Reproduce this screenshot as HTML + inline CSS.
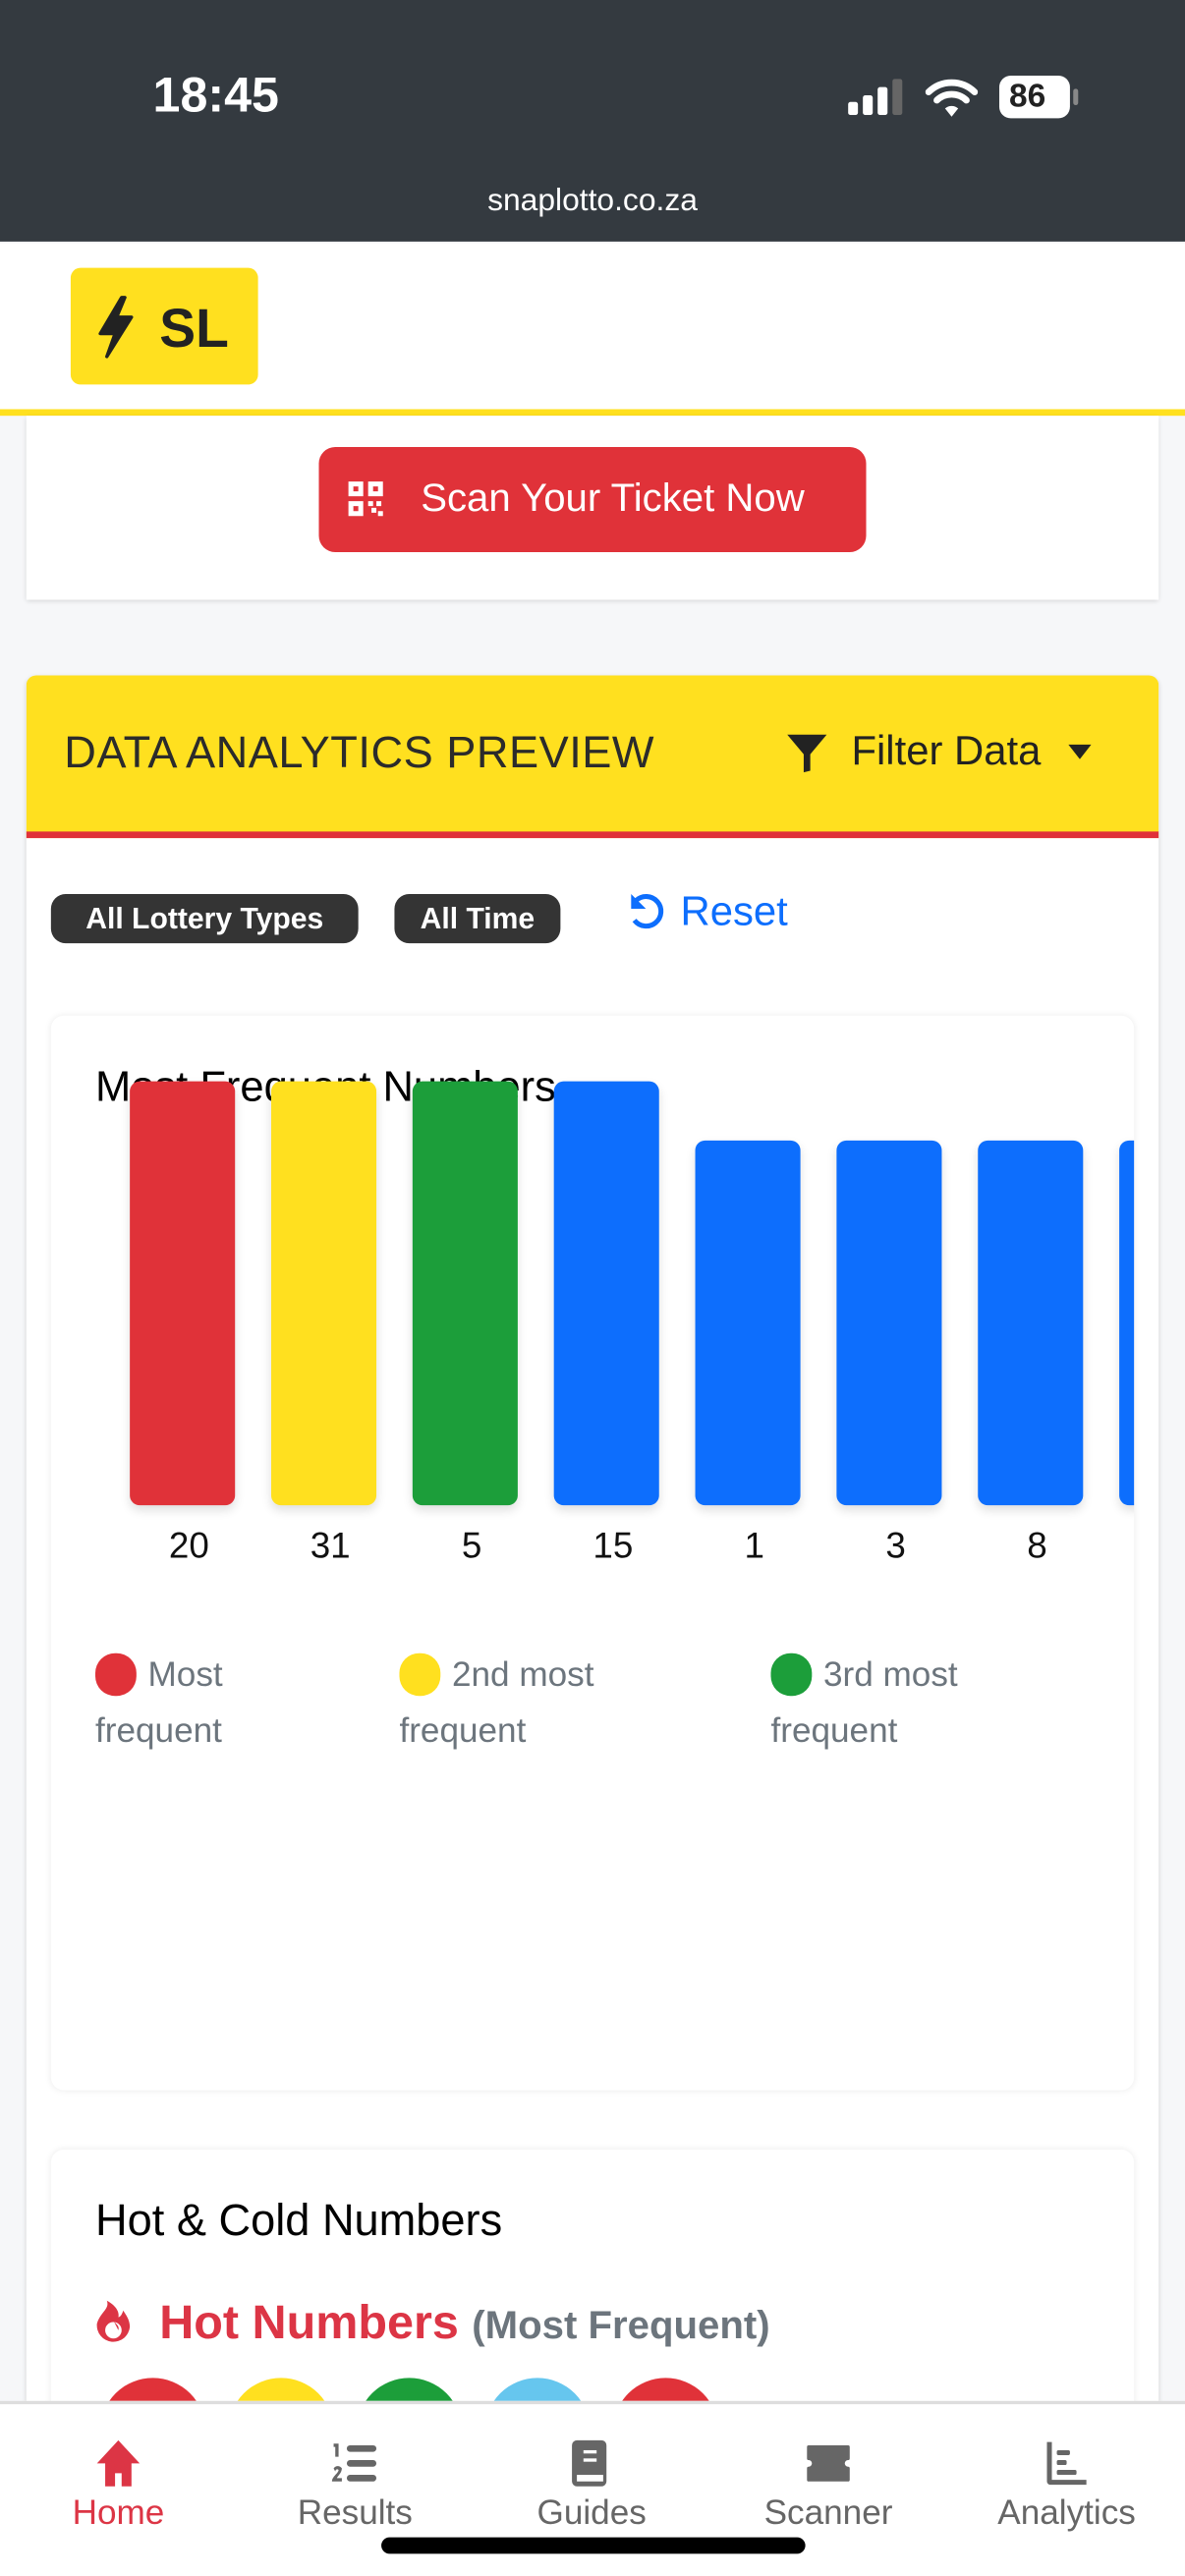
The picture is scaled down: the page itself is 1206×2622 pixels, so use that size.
<!DOCTYPE html>
<html><head><meta charset="utf-8"><style>
html,body{margin:0;padding:0;width:1206px;height:2622px;overflow:hidden;background:#f6f7f9}
#w{width:721px;height:1568px;transform:scale(1.67268);transform-origin:0 0;font-family:"Liberation Sans",sans-serif;position:relative;overflow:hidden;background:#f6f7f9}
.a{position:absolute}
.bar{position:absolute;width:64px;border-radius:6px;box-shadow:0 3px 6px rgba(0,0,0,.12)}
.lbl{position:absolute;top:928px;width:64px;text-align:center;font-size:22px;color:#111}
.lg{position:absolute;top:1003px;font-size:21px;color:#6c757d;line-height:34px;width:150px}
.lg i{display:inline-block;width:25px;height:26px;border-radius:12px;vertical-align:-6px;margin-right:7px}
.nav{position:absolute;top:1484px;width:144px;text-align:center;font-size:21px;color:#666}
.nav svg{display:block;margin:0 auto 4px}
.ball{position:absolute;top:1447px;width:64px;height:64px;border-radius:50%}
</style></head><body><div id="w">
<div class="a" style="left:0;top:0;width:721px;height:147px;background:#343a40"></div>
<div class="a" style="left:93px;top:42px;font-size:30px;font-weight:bold;color:#fff">18:45</div>
<svg class="a" style="left:516px;top:48px" width="36" height="22"><rect x="0" y="14" width="6" height="8" rx="1.5" fill="#fff"/><rect x="9" y="10" width="6" height="12" rx="1.5" fill="#fff"/><rect x="18" y="5" width="6" height="17" rx="1.5" fill="#fff"/><rect x="27" y="0" width="6" height="22" rx="1.5" fill="#666"/></svg>
<svg class="a" style="left:563px;top:46px" width="32" height="26" viewBox="0 0 32 26"><path d="M2 10A20 20 0 0 1 30 10" stroke="#fff" stroke-width="4" fill="none" stroke-linecap="round"/><path d="M7 15A13 13 0 0 1 25 15" stroke="#fff" stroke-width="4" fill="none" stroke-linecap="round"/><path d="M12 20L16 25L20 20A6 6 0 0 0 12 20Z" fill="#fff"/></svg>
<div class="a" style="left:608px;top:46px;width:43px;height:26px;background:#fff;border-radius:7px;font-size:20px;font-weight:bold;color:#222;line-height:26px;text-indent:6px">86</div>
<div class="a" style="left:653px;top:54px;width:3px;height:10px;background:#888;border-radius:2px"></div>
<div class="a" style="left:0;top:112px;width:721px;text-align:center;font-size:19px;color:#fff">snaplotto.co.za</div>
<div class="a" style="left:0;top:148px;width:721px;height:102px;background:#fff"></div>
<div class="a" style="left:43px;top:163px;width:114px;height:71px;background:#ffe01f;border-radius:6px"></div>
<svg class="a" style="left:58px;top:179px" width="26" height="40" viewBox="0 0 26 40"><path d="M16 2L3 24H12L7 38L22 14H13L18 2Z" fill="#222" stroke="#222" stroke-width="2" stroke-linejoin="round"/></svg>
<div class="a" style="left:97px;top:181px;font-size:33px;font-weight:bold;color:#222">SL</div>
<div class="a" style="left:0;top:249px;width:721px;height:4px;background:#ffe01f"></div>
<div class="a" style="left:16px;top:253px;width:689px;height:112px;background:#fff;box-shadow:0 1px 3px rgba(0,0,0,.15)"></div>
<div class="a" style="left:194px;top:272px;width:333px;height:64px;background:#e03239;border-radius:10px"></div>
<svg class="a" style="left:211px;top:292px" width="24" height="24" viewBox="0 0 24 24" fill="#fff"><path d="M1 1h9v9H1zM4 4v3h3V4zM13 1h9v9h-9zM16 4v3h3V4zM1 13h9v9H1zM4 16v3h3v-3zM13 13h3v3h-3zM18 13h3v3h-3zM15 17h3v3h-3zM19 19h3v3h-3z"/></svg>
<div class="a" style="left:256px;top:290px;font-size:24px;color:#fff">Scan Your Ticket Now</div>
<div class="a" style="left:16px;top:411px;width:689px;height:1100px;background:#fff;border-radius:6px;box-shadow:0 1px 3px rgba(0,0,0,.15);overflow:hidden">
<div style="height:95px;background:#ffe01f;border-bottom:4px solid #e03239"></div></div>
<div class="a" style="left:39px;top:443px;font-size:27px;color:#2b2b2b;letter-spacing:.3px">DATA ANALYTICS PREVIEW</div>
<svg class="a" style="left:478px;top:445px" width="26" height="26" viewBox="0 0 26 26"><path d="M1 2h24L15 14v10l-4 1V14Z" fill="#222"/></svg>
<div class="a" style="left:518px;top:443px;font-size:25px;color:#222">Filter Data</div>
<svg class="a" style="left:650px;top:453px" width="14" height="9"><path d="M0 0h14L7 9Z" fill="#222"/></svg>
<div class="a" style="left:31px;top:544px;width:187px;height:30px;background:#343434;border-radius:9px;color:#fff;font-weight:bold;font-size:18px;line-height:30px;text-align:center">All Lottery Types</div>
<div class="a" style="left:240px;top:544px;width:101px;height:30px;background:#343434;border-radius:9px;color:#fff;font-weight:bold;font-size:18px;line-height:30px;text-align:center">All Time</div>
<svg class="a" style="left:382px;top:543px" width="24" height="26" viewBox="0 0 24 26"><path d="M5 5A9 9 0 1 1 4 17" stroke="#0d6efd" stroke-width="3" fill="none"/><path d="M2 1v9h9Z" fill="#0d6efd"/></svg>
<div class="a" style="left:414px;top:541px;font-size:25px;color:#0d6efd">Reset</div>
<div class="a" style="left:31px;top:618px;width:659px;height:654px;background:#fff;border-radius:8px;box-shadow:0 0 4px rgba(0,0,0,.08);overflow:hidden">
<div class="a" style="left:27px;top:28px;font-size:26px;color:#000">Most Frequent Numbers</div>
<div class="bar" style="left:48px;top:40px;height:258px;background:#e03239"></div>
<div class="bar" style="left:134px;top:40px;height:258px;background:#ffe01f"></div>
<div class="bar" style="left:220px;top:40px;height:258px;background:#1c9e3a"></div>
<div class="bar" style="left:306px;top:40px;height:258px;background:#0d6efd"></div>
<div class="bar" style="left:392px;top:76px;height:222px;background:#0d6efd"></div>
<div class="bar" style="left:478px;top:76px;height:222px;background:#0d6efd"></div>
<div class="bar" style="left:564px;top:76px;height:222px;background:#0d6efd"></div>
<div class="bar" style="left:650px;top:76px;height:222px;background:#0d6efd"></div>
</div>
<div class="lbl" style="left:83px">20</div><div class="lbl" style="left:169px">31</div><div class="lbl" style="left:255px">5</div><div class="lbl" style="left:341px">15</div><div class="lbl" style="left:427px">1</div><div class="lbl" style="left:513px">3</div><div class="lbl" style="left:599px">8</div>
<div class="lg" style="left:58px"><i style="background:#e03239"></i>Most frequent</div>
<div class="lg" style="left:243px"><i style="background:#ffe01f"></i>2nd most frequent</div>
<div class="lg" style="left:469px"><i style="background:#1c9e3a"></i>3rd most frequent</div>
<div class="a" style="left:31px;top:1308px;width:659px;height:300px;background:#fff;border-radius:8px;box-shadow:0 0 4px rgba(0,0,0,.08)"></div>
<div class="a" style="left:58px;top:1336px;font-size:27px;color:#000">Hot &amp; Cold Numbers</div>
<svg class="a" style="left:57px;top:1399px" width="24" height="30" viewBox="0 0 24 30"><path d="M8 1C10 6 4 8 2 15a10 10 0 0 0 20 2c0-5-3-8-4-10-1 3-2 4-3 4C16 7 12 3 8 1Z" fill="#dc3545"/><circle cx="12" cy="19" r="5" fill="#fff"/><path d="M12 13c1 2 4 3 3 6" fill="#dc3545"/></svg>
<div class="a" style="left:97px;top:1398px;font-size:29px;font-weight:bold;color:#dc3545">Hot Numbers <span style="font-size:24px;color:#6c757d">(Most Frequent)</span></div>
<div class="ball" style="left:61px;background:#e03239"></div>
<div class="ball" style="left:139px;background:#ffe01f"></div>
<div class="ball" style="left:217px;background:#1c9e3a"></div>
<div class="ball" style="left:295px;background:#66c6ee"></div>
<div class="ball" style="left:373px;background:#e03239"></div>
<div class="a" style="left:0;top:1461px;width:721px;height:107px;background:#fff;border-top:2px solid #ddd"></div>
<div class="nav" style="left:0;color:#dc3545"><svg width="30" height="30" viewBox="0 0 30 30"><path d="M15 1L2 15h5v14h6v-8h4v8h6V15h5Z" fill="#dc3545"/></svg>Home</div>
<div class="nav" style="left:144px"><svg width="30" height="30" viewBox="0 0 30 30" fill="#666"><path d="M2 3h3v8H3V5H2ZM2 18a3 3 0 0 1 5 0c0 3-3 5-3 6h3v2H1c0-3 4-5 4-7-1-1-2 0-2 1Z"/><rect x="10" y="4" width="18" height="4" rx="2"/><rect x="10" y="13" width="18" height="4" rx="2"/><rect x="10" y="22" width="18" height="4" rx="2"/></svg>Results</div>
<div class="nav" style="left:288px"><svg width="30" height="30" viewBox="0 0 30 30"><rect x="3" y="1" width="21" height="28" rx="3" fill="#666"/><rect x="6" y="22" width="16" height="4" fill="#fff"/><rect x="10" y="7" width="8" height="2" fill="#fff"/><rect x="10" y="12" width="8" height="2" fill="#fff"/></svg>Guides</div>
<div class="nav" style="left:432px"><svg width="30" height="30" viewBox="0 0 30 30"><path d="M3 5h24v7a3 3 0 0 0 0 6v7H3v-7a3 3 0 0 0 0-6Z" fill="#666" stroke="#666" stroke-linejoin="round" stroke-width="2"/></svg>Scanner</div>
<div class="nav" style="left:577px"><svg width="30" height="30" viewBox="0 0 30 30" fill="#666"><path d="M3 2h3v23h21v3H5a2 2 0 0 1-2-2Z"/><rect x="9" y="7" width="8" height="3" rx="1"/><rect x="9" y="13" width="6" height="3" rx="1"/><rect x="9" y="19" width="12" height="3" rx="1"/></svg>Analytics</div>
<div class="a" style="left:232px;top:1544px;width:258px;height:10px;background:#000;border-radius:5px"></div>
</div></body></html>
